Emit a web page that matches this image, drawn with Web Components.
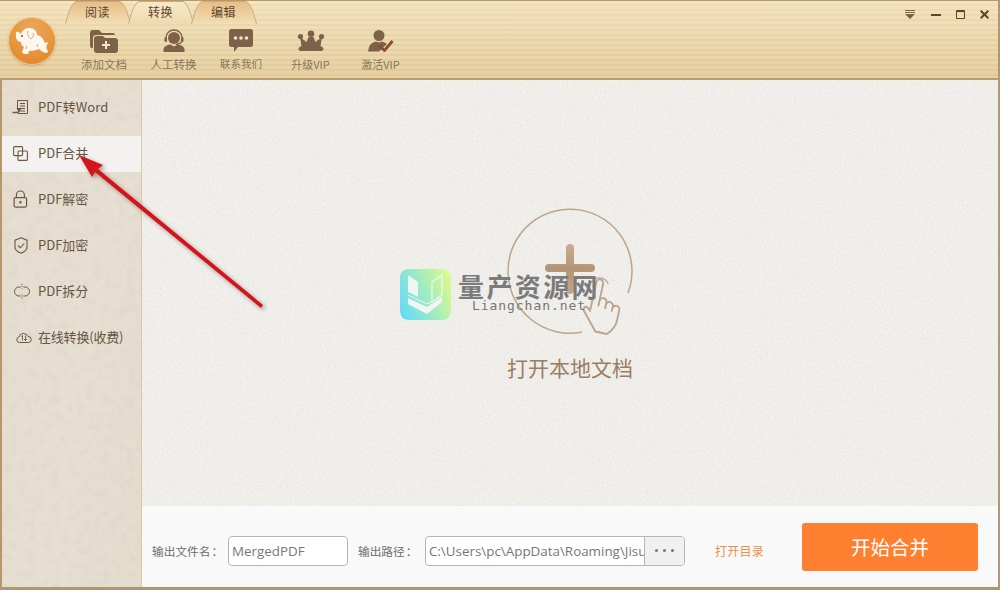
<!DOCTYPE html>
<html lang="zh">
<head>
<meta charset="utf-8">
<title>PDF合并</title>
<style>
  html, body { margin: 0; padding: 0; width: 1000px; height: 590px; overflow: hidden; }
  body { font-family: "Noto Sans CJK SC", "Noto Sans", sans-serif; }
</style>
</head>
<body>
<app-window>
  <title-bar slot="top">
    <tab-item slot="tabs">阅读</tab-item>
    <tab-item slot="tabs" active>转换</tab-item>
    <tab-item slot="tabs">编辑</tab-item>
    <tool-button slot="tools" icon="folder" style="width:70px;font-size:11.5px">添加文档</tool-button>
    <tool-button slot="tools" icon="agent" style="width:69px;font-size:11.5px">人工转换</tool-button>
    <tool-button slot="tools" icon="chat" style="width:66px;font-size:10.5px">联系我们</tool-button>
    <tool-button slot="tools" icon="crown" style="width:73px">升级VIP</tool-button>
    <tool-button slot="tools" icon="activate" style="width:67px">激活VIP</tool-button>
  </title-bar>
  <side-bar slot="side">
    <side-item icon="word" style="letter-spacing:.1px">PDF转Word</side-item>
    <side-item icon="merge" active>PDF合并</side-item>
    <side-item icon="lock">PDF解密</side-item>
    <side-item icon="shield">PDF加密</side-item>
    <side-item icon="split">PDF拆分</side-item>
    <side-item icon="cloud" style="letter-spacing:-.2px">在线转换(收费)</side-item>
  </side-bar>
  <drop-zone slot="main">打开本地文档</drop-zone>
  <output-bar slot="bottom"></output-bar>
  <water-mark slot="over"></water-mark>
  <red-arrow slot="over"></red-arrow>
</app-window>

<script>
const ICONS = {
  folder: `<svg width="28" height="24" viewBox="0 0 28 24"><path fill="#7d6149" d="M0 4a3 3 0 0 1 3-3h6l3 3h11a2 2 0 0 1 2 2H6a3 3 0 0 0-3 3v10H2a2 2 0 0 1-2-2z"/><path fill="#7d6149" d="M4 10a3 3 0 0 1 3-3h6l2 2h10a3 3 0 0 1 3 3v9a3 3 0 0 1-3 3H7a3 3 0 0 1-3-3z"/><path fill="#f2e6cc" d="M15 12h2v3h3v2h-3v3h-2v-3h-3v-2h3z"/></svg>`,
  agent: `<svg width="24" height="24" viewBox="0 0 24 24"><circle cx="12" cy="9" r="6" fill="#7d6149"/><path fill="none" stroke="#7d6149" stroke-width="1.4" d="M4 11V8.500a8 7.500 0 0 1 16 0V11c0 2-2 4-6 4.500"/><rect x="2.500" y="8" width="2.500" height="5" rx="1" fill="#7d6149"/><rect x="19" y="8" width="2.500" height="5" rx="1" fill="#7d6149"/><path fill="#7d6149" d="M1.500 23v-2.500c0-2.500 3-4.500 6.500-5l4 2 4-2c3.500.5 6.500 2.500 6.500 5V23z"/></svg>`,
  chat: `<svg width="24" height="24" viewBox="0 0 24 24"><path fill="#7d6149" d="M2.500 0h19A2.500 2.500 0 0 1 24 2.500v13a2.500 2.500 0 0 1-2.500 2.500H9l-4 5v-5H2.500A2.500 2.500 0 0 1 0 15.500v-13A2.500 2.500 0 0 1 2.500 0z"/><circle cx="6.500" cy="9" r="1.800" fill="#f2e6cc"/><circle cx="12" cy="9" r="1.800" fill="#f2e6cc"/><circle cx="17.500" cy="9" r="1.800" fill="#f2e6cc"/></svg>`,
  crown: `<svg width="28" height="22" viewBox="0 0 28 22"><circle cx="14" cy="3.800" r="3.300" fill="#7d6149"/><circle cx="3.500" cy="6.500" r="2.600" fill="#7d6149"/><circle cx="24.500" cy="6.500" r="2.600" fill="#7d6149"/><path fill="#7d6149" d="M3 7l6.500 5 2-5h5l2 5L25 7l-1.500 9c1.500.5 3 1.500 3 3 0 1.500-1.500 2-3 2H4.500c-1.500 0-3-.5-3-2 0-1.500 1.500-2.500 3-3z"/></svg>`,
  activate: `<svg width="26" height="22" viewBox="0 0 26 22"><circle cx="11" cy="5.500" r="5.500" fill="#7d6149"/><path fill="#7d6149" d="M0 21.500c.5-2 1-5 2-6.500 1.500-2 4-3 6-3.500l3 1 3-1c2 .5 3.500 1.300 5 2.500l-8 7.500z"/><path fill="none" stroke="#8f4a34" stroke-width="2.800" d="M11 15.500l5.500 5L24.500 11"/></svg>`,
  word: `<svg width="18" height="16" viewBox="0 0 18 16" fill="none" stroke="#6b5840"><path d="M5.500 11V1.500h10v13H6"/><path d="M8 4.500h5M8 7h5M8 9.500h5M8 12h5"/><path stroke-width="1.600" d="M0.500 13.500h4.500c1.500 0 2-1 2-2.500"/><path fill="#6b5840" d="M5 9.500h4l-2 2.500z"/></svg>`,
  merge: `<svg style="margin-left:1px" width="15" height="15" viewBox="0 0 15 15" fill="none" stroke="#6b5840" stroke-width="1.100"><rect x=".6" y=".6" width="9" height="9" rx="1"/><rect x="5" y="5" width="9.400" height="9.400" rx="1"/></svg>`,
  lock: `<svg style="margin-left:1px" width="15" height="18" viewBox="0 0 15 18" fill="none" stroke="#6b5840" stroke-width="1.200"><rect x="1.100" y="7.600" width="12.500" height="9.500" rx="1.500"/><path d="M3.400 7.500V5a4 4 0 0 1 8 0v2.500"/><path stroke-width="2" d="M7.400 11v2.500"/></svg>`,
  shield: `<svg style="margin-left:2px" width="14" height="17" viewBox="0 0 14 17" fill="none" stroke="#6b5840" stroke-width="1.100"><path d="M7 .8l6 2.400v7c0 2.500-3 4.800-6 6-3-1.200-6-3.500-6-6v-7z"/><path d="M4 8.500l2.300 2.300L10.300 6.500"/></svg>`,
  split: `<svg style="margin-left:2px" width="16" height="15" viewBox="0 0 16 15" fill="none" stroke="#6b5840" stroke-width="1"><path d="M6.500 3H5a4.500 4.500 0 0 0-4.500 4.500A4.500 4.500 0 0 0 5 12h1.500"/><path d="M9.500 3H11a4.500 4.500 0 0 1 4.500 4.500A4.500 4.500 0 0 1 11 12H9.500"/><path stroke-dasharray="1 1" d="M8 0v4.500M8 10.500V15"/></svg>`,
  cloud: `<svg style="margin-left:4px" width="16" height="11" viewBox="0 0 16 11" fill="none" stroke="#6b5840" stroke-width="1"><path d="M3.500 10.500a2.800 2.800 0 0 1-.6-5.500A4.800 4.800 0 0 1 12 4.500a3 3 0 0 1 .5 6z"/><path d="M6.500 3.500l-1 1M6.500 3.500v5M9.500 3.500v5M8 7l1.500 1.500L11 7" stroke-width=".9"/></svg>`
}

class AppWindow extends HTMLElement {
  constructor () {
    super()
    this.shadow = this.attachShadow({ mode: 'open' })
    this.shadow.innerHTML = /* html */`
    <style>
      :host {
        display: grid;
        grid-template-columns: 140px 1fr;
        grid-template-rows: 80px 1fr 81px;
        grid-template-areas: "top top" "side main" "side bottom";
        box-sizing: border-box;
        width: 1000px;
        height: 590px;
        position: relative;
        border-left: 2px solid #b8966c;
        border-right: 2px solid #b8966c;
        border-bottom: 3px solid #b09670;
        background: #f8f8f8;
      }
      ::slotted([slot=top]) { grid-area: top; }
      ::slotted([slot=side]) { grid-area: side; }
      ::slotted([slot=main]) { grid-area: main; }
      ::slotted([slot=bottom]) { grid-area: bottom; }
    </style>
    <slot name="top"></slot>
    <slot name="side"></slot>
    <slot name="main"></slot>
    <slot name="bottom"></slot>
    <slot name="over"></slot>
    `
  }
}

class TitleBar extends HTMLElement {
  constructor () {
    super()
    this.shadow = this.attachShadow({ mode: 'open' })
    this.shadow.innerHTML = /* html */`
    <style>
      :host {
        display: grid;
        grid-template-columns: 66px 1fr auto;
        grid-template-rows: 23px 1fr;
        box-sizing: border-box;
        height: 80px;
        margin: 0 -2px;
        border-top: 1px solid #b8966c;
        border-bottom: 2px solid #bb9a70;
        border-right: 2px solid #b8966c;
        background:
          repeating-linear-gradient(to bottom, rgba(255,255,255,.09) 0 3px, rgba(150,110,50,.04) 3px 5px),
          linear-gradient(to bottom, #f3e2ba, #e3cc9a);
      }
      .logo {
        grid-row: 1 / 3;
        width: 46px;
        height: 46px;
        margin: 17px 0 0 9px;
        border-radius: 50%;
        background: radial-gradient(circle at 50% 25%, #e9a85c 0, #e8953d 55%, #df7f22 100%);
        box-shadow: 0 0 0 1px #f0c98f, 0 1px 3px rgba(120,80,30,.5);
        display: grid;
        place-items: center;
      }
      .tabs { display: flex; }
      .controls {
        grid-row: 1 / 3;
        grid-column: 3;
        display: flex;
        align-items: center;
        align-self: start;
        gap: 15px;
        padding: 9px 9px 0 0;
      }
      .controls svg:first-child { margin-right: 1px; }
      .tools { display: flex; grid-column: 2 / 4; grid-row: 2; align-self: start; padding-left: 3px; padding-top: 5px; }
    </style>
    <div class="logo">
      <svg width="34" height="26" viewBox="0 0 34 26">
        <path fill="#fdf8ef" d="M1 4c2-1 4 1 5 2 1-3 4-6 8-6 5 0 8 3 8 7 3 0 6 3 8 8l3-1-1 3c-1 1-1 4 1 6l-1 2c-3 0-6-2-8-4-3 1-6 2-10 2l-1 3c-2 1-5 0-6-2l2-5c-2-1-3-3-3-5-3 0-5-3-5-5z"/>
        <circle cx="7" cy="8" r="1" fill="#8a5420"/>
        <path fill="none" stroke="#dca871" stroke-width="1" d="M13 3c-1 3 0 6 3 8 2-1 3-4 2-6M11 21l1-3M22 19l1-3"/>
      </svg>
    </div>
    <div class="tabs"><slot name="tabs"></slot></div>
    <div class="tools"><slot name="tools"></slot></div>
    <div class="controls">
      <svg width="10" height="9" viewBox="0 0 10 9"><path fill="#7d6242" d="M0 0h10v1H0zM0 2h10v1H0zM0 4h10L5 9z"/></svg>
      <svg width="10" height="9" viewBox="0 0 10 9"><path fill="#5e4528" d="M0 4h10v2H0z"/></svg>
      <svg width="9" height="9" viewBox="0 0 9 9" fill="none" stroke="#5e4528"><path d="M.5 .5h8v8h-8z"/><path d="M0 1.500h9" stroke-width="1.200"/></svg>
      <svg width="9" height="9" viewBox="0 0 9 9" fill="none" stroke="#5e4528" stroke-width="2"><path d="M.7 .7l7.600 7.600M8.300 .7L.7 8.300"/></svg>
    </div>
    `
  }
}

class TabItem extends HTMLElement {
  constructor () {
    super()
    this.shadow = this.attachShadow({ mode: 'open' })
    const on = this.hasAttribute('active')
    const id = on ? 'a' : 'b'
    this.shadow.innerHTML = /* html */`
    <style>
      :host {
        display: block;
        position: relative;
        width: 63px;
        height: 23px;
        text-align: center;
        font-size: 12px;
        line-height: 22px;
        color: #5c4630;
      }
      svg { position: absolute; left: -1.500px; top: 0; }
      span { position: relative; letter-spacing: .5px; }
    </style>
    <svg width="66" height="23" viewBox="0 0 66 23">
      <defs><linearGradient id="${id}" x1="0" y1="0" x2="0" y2="1">
        <stop offset="0" stop-color="${on ? '#f6e9c8' : '#e9bd85'}"/>
        <stop offset="1" stop-color="${on ? '#eedbae' : '#f0dfb5'}"/>
      </linearGradient></defs>
      <path fill="url(#${id})" stroke="#c9ad80" d="M.5 23C3 14 5 4 11 .5h44c6 3.500 8 13.500 10.500 22.500"/>
    </svg>
    <span><slot></slot></span>
    `
  }
}

class ToolButton extends HTMLElement {
  constructor () {
    super()
    this.shadow = this.attachShadow({ mode: 'open' })
    this.shadow.innerHTML = /* html */`
    <style>
      :host {
        display: flex;
        flex-direction: column;
        align-items: center;
        width: 69px;
        font-size: 11px;
        line-height: 14px;
        color: #8a7459;
        white-space: nowrap;
      }
      .icon { height: 24px; display: grid; place-items: center; margin-bottom: 4px; }
    </style>
    <div class="icon">${ICONS[this.getAttribute('icon')]}</div>
    <slot></slot>
    `
  }
}

class PaperTexture extends HTMLElement {
  constructor () {
    super()
    this.shadow = this.attachShadow({ mode: 'open' })
    const id = this.getAttribute('fid')
    this.shadow.innerHTML = /* html */`
    <style>
      :host { position: absolute; inset: 0; display: block; overflow: hidden; }
      svg { display: block; width: 100%; height: 100%; }
    </style>
    <svg>
      <filter id="${id}" x="0" y="0" width="100%" height="100%">
        <feTurbulence type="fractalNoise" baseFrequency="${this.getAttribute('freq') || '0.55'}" numOctaves="2" seed="4"/>
        <feColorMatrix values="0 0 0 0 .45  0 0 0 0 .40  0 0 0 0 .32  1.100 0 0 0 -.46"/>
      </filter>
      <rect width="100%" height="100%" filter="url(#${id})" opacity="${this.getAttribute('strength') || '.3'}"/>
    </svg>
    `
  }
}

class SideBar extends HTMLElement {
  constructor () {
    super()
    this.shadow = this.attachShadow({ mode: 'open' })
    this.shadow.innerHTML = /* html */`
    <style>
      :host {
        display: block;
        position: relative;
        box-sizing: border-box;
        padding-top: 10px;
        border-right: 1px solid #dcc9a4;
        background: linear-gradient(100deg, #e6ddcf 0, #e6dfd2 60%, #e4dccd 100%);
      }
      .list { position: relative; display: flex; flex-direction: column; gap: 10px; }
    </style>
    <paper-texture fid="sideNoise" freq="0.12" strength=".22"></paper-texture>
    <div class="list"><slot></slot></div>
    `
  }
}

class SideItem extends HTMLElement {
  constructor () {
    super()
    this.shadow = this.attachShadow({ mode: 'open' })
    this.shadow.innerHTML = /* html */`
    <style>
      :host {
        display: flex;
        align-items: center;
        box-sizing: border-box;
        height: 36px;
        padding: 0 0 2px 10px;
        font-size: 13px;
        color: #66553f;
      }
      :host([active]) { background: #f3f2f0; }
      .icon { width: 26px; flex: none; display: flex; align-items: center; }
      .text { margin-bottom: 2px; white-space: nowrap; }
    </style>
    <div class="icon">${ICONS[this.getAttribute('icon')]}</div>
    <div class="text"><slot></slot></div>
    `
  }
}

class DropZone extends HTMLElement {
  constructor () {
    super()
    this.shadow = this.attachShadow({ mode: 'open' })
    this.shadow.innerHTML = /* html */`
    <style>
      :host {
        display: flex;
        flex-direction: column;
        align-items: center;
        justify-content: center;
        position: relative;
        background: #f1f0ec;
        padding-top: 2px;
        font-size: 21px;
        color: #9c7d63;
      }
      .mark { position: relative; display: block; margin-bottom: 17px; }
      .text { position: relative; line-height: 30px; }
    </style>
    <paper-texture fid="mainNoise" freq="0.6" strength=".3"></paper-texture>
    <svg class="mark" width="128" height="128" viewBox="0 0 128 128">
      <defs>
        <linearGradient id="plus" x1="0" y1="0" x2="0" y2="1">
          <stop offset="0" stop-color="#c9ad92"/><stop offset=".5" stop-color="#b39578"/><stop offset="1" stop-color="#c2a58a"/>
        </linearGradient>
      </defs>
      <path fill="none" stroke="#bda48b" stroke-width="1.500" d="M76 125A62 62 0 1 1 122 86"/>
      <path fill="url(#plus)" d="M60 41a4 4 0 0 1 8 0v16h17a4 4 0 0 1 0 8H68v18a4 4 0 0 1-8 0V65H43a4 4 0 0 1 0-8h17z"/>
      <g fill="none" stroke="#bba58e" stroke-width="1.600" stroke-linecap="round" stroke-linejoin="round" transform="translate(3 -4) rotate(12 95 105) translate(95 105) scale(1.18) translate(-95 -105)">
        <path d="M84 108V85a3 3 0 0 1 6 0v19M90 100a3 3 0 0 1 6 0v5M96 102a3 3 0 0 1 6 0v4M102 104a3 3 0 0 1 6 0v9c0 6-3 10-6 13H92l-13-15c-2-3 1-5 3-3l2 2"/>
        <path stroke-width="1.100" d="M80 86a8 8 0 0 1 14-2"/>
      </g>
    </svg>
    <div class="text"><slot></slot></div>
    `
  }
}

class OutputBar extends HTMLElement {
  constructor () {
    super()
    this.shadow = this.attachShadow({ mode: 'open' })
    this.shadow.innerHTML = /* html */`
    <style>
      :host {
        display: flex;
        align-items: center;
        box-sizing: border-box;
        padding: 0 20px 0 10px;
        background: #f9f9f9;
        font-size: 11.700px;
        color: #6e6e6e;
      }
      .label { margin-top: 8px; white-space: nowrap; }
      .label b { font-weight: 400; font-family: "Noto Sans CJK TC", sans-serif; padding-left: 1px; }
      .field {
        box-sizing: border-box;
        height: 30px;
        border: 1px solid #b5b5b5;
        border-radius: 4px;
        background: #fff;
        display: flex;
        align-items: center;
        font-family: "Open Sans", sans-serif;
        font-size: 13.400px;
        color: #777;
        overflow: hidden;
        white-space: nowrap;
      }
      .name { width: 120px; margin: 8px 10px 0 4.800px; padding-left: 3px; }
      .path { width: 260px; margin: 8px 30px 0 7.500px; padding-left: 3px; }
      .path span { flex: 1; overflow: hidden; }
      .more {
        flex: none;
        width: 39px;
        height: 100%;
        border-left: 1px solid #b5b5b5;
        background: #f0f0f0;
        display: flex;
        align-items: center;
        justify-content: center;
        gap: 5px;
      }
      .more i { width: 3px; height: 3px; border-radius: 50%; background: #777; }
      .open { color: #ec8f4c; font-size: 12px; letter-spacing: .3px; margin-top: 8px; white-space: nowrap; }
      .start {
        margin-left: auto;
        width: 176px;
        height: 48px;
        border-radius: 3px;
        background: #ff7f30;
        color: #fff;
        font-size: 19.500px;
        display: grid;
        place-items: center;
      }
    </style>
    <span class="label">输出文件名<b>：</b></span>
    <div class="field name">MergedPDF</div>
    <span class="label">输出路径<b>：</b></span>
    <div class="field path"><span>C:\\Users\\pc\\AppData\\Roaming\\Jisu</span><div class="more"><i></i><i></i><i></i></div></div>
    <span class="open">打开目录</span>
    <div class="start">开始合并</div>
    `
  }
}

class WaterMark extends HTMLElement {
  constructor () {
    super()
    this.shadow = this.attachShadow({ mode: 'open' })
    this.shadow.innerHTML = /* html */`
    <style>
      :host {
        position: absolute;
        left: 398px;
        top: 269px;
        display: flex;
        gap: 7px;
        pointer-events: none;
      }
      .badge { width: 51px; height: 51px; border-radius: 8px; display: block; }
      .words { display: flex; flex-direction: column; align-items: center; padding-top: 4px; }
      .cn { font-size: 26px; line-height: 26px; font-weight: 700; color: #7b7b7b; letter-spacing: 2.400px; }
      .en { font-family: "DejaVu Sans Mono", monospace; font-size: 13px; line-height: 14px; letter-spacing: .95px; color: #777; }
    </style>
    <svg class="badge" viewBox="0 0 51 51">
      <defs>
        <linearGradient id="wm" x1="0" y1=".7" x2="1" y2=".3">
          <stop offset="0" stop-color="#68dcf5"/><stop offset="1" stop-color="#d8f98f"/>
        </linearGradient>
      </defs>
      <rect width="51" height="51" rx="8" fill="url(#wm)"/>
      <path fill="#eef5f3" d="M8 6l10 7v15L8 23z"/>
      <path fill="none" stroke="#f4f8f4" stroke-width="1.100" d="M32 13l10-7v20l-10 7z"/>
      <path fill="none" stroke="#f4f8f4" stroke-width="1" d="M8 26l19 9 5-2"/>
      <path fill="#f1f6f4" d="M8 29l19 9 15-10v5L27 45 8 35z"/>
    </svg>
    <div class="words">
      <div class="cn">量产资源网</div>
      <div class="en">Liangchan.net</div>
    </div>
    `
  }
}

class RedArrow extends HTMLElement {
  constructor () {
    super()
    this.shadow = this.attachShadow({ mode: 'open' })
    this.shadow.innerHTML = /* html */`
    <style>
      :host { position: absolute; inset: 0; display: block; pointer-events: none; }
      svg { display: block; margin: 0 0 0 -2px; filter: drop-shadow(2px 2px 2px rgba(60,40,30,.45)); }
    </style>
    <svg width="1000" height="590" viewBox="0 0 1000 590">
      <path fill="#d4141a" d="M79 155l24 10-5 4 165 136-2 3L95 172l-3 5z"/>
    </svg>
    `
  }
}

customElements.define('app-window', AppWindow)
customElements.define('title-bar', TitleBar)
customElements.define('tab-item', TabItem)
customElements.define('tool-button', ToolButton)
customElements.define('paper-texture', PaperTexture)
customElements.define('side-bar', SideBar)
customElements.define('side-item', SideItem)
customElements.define('drop-zone', DropZone)
customElements.define('output-bar', OutputBar)
customElements.define('water-mark', WaterMark)
customElements.define('red-arrow', RedArrow)
</script>
</body>
</html>
